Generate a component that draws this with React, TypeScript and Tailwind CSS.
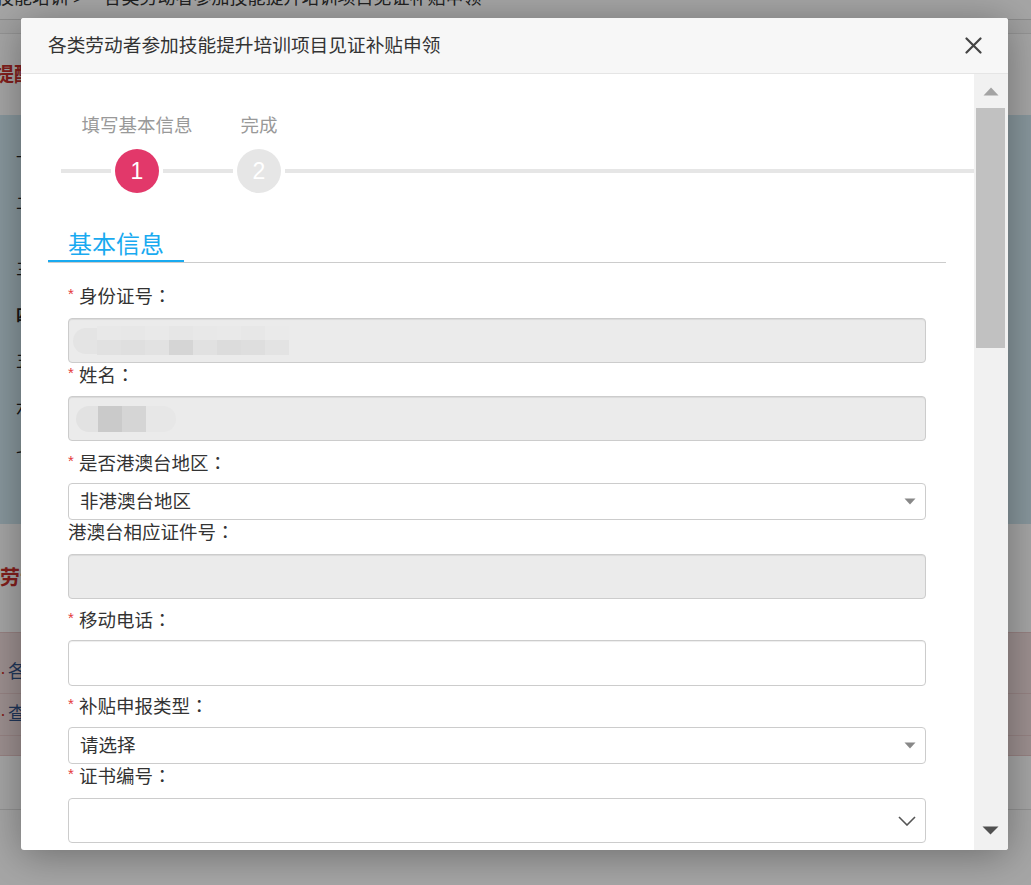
const font = "font-['Liberation_Sans','Noto_Sans_CJK_SC',sans-serif]"

function Star() {
  return <span className="relative -top-[4px] inline-block w-[11px] text-[15px] leading-none text-[#e4393c]">*</span>
}

function Label({ text, required = true }: { text: string; required?: boolean }) {
  return (
    <div className="h-[26px] whitespace-nowrap text-[18.5px] leading-[26px] text-[#333]">
      {required && <Star />}
      {text}
      <span className="font-['Noto_Sans_CJK_TC',sans-serif] leading-none">：</span>
    </div>
  )
}

function Caret() {
  return (
    <svg width="12" height="7" viewBox="0 0 12 7" className="flex-none">
      <path d="M0.5 0.5 L11.5 0.5 L6 6.5 Z" fill="#888" />
    </svg>
  )
}

function IdMosaic() {
  const top = ['#e8e8e8', '#e7e7e7', '#e9e9e9', '#e6e6e6', '#e8e8e8', '#e9e9e9', '#e7e7e7', '#eaeaea']
  const bottom = ['#e1e1e1', '#dfdfdf', '#e2e2e2', '#d5d5d5', '#e1e1e1', '#dcdcdc', '#dedede', '#e3e3e3']
  return (
    <div className="flex items-center pl-[4px] blur-[0.4px]">
      <div className="h-[26px] w-[24px] rounded-l-full bg-[#e4e4e4]" />
      <div className="flex flex-col">
        <div className="flex">
          {top.map((c, i) => (
            <div key={i} className="h-[14px] w-[24px]" style={{ background: c }} />
          ))}
        </div>
        <div className="flex">
          {bottom.map((c, i) => (
            <div key={i} className="h-[15px] w-[24px]" style={{ background: c }} />
          ))}
        </div>
      </div>
    </div>
  )
}

function NameMosaic() {
  return (
    <div className="flex items-center pl-[7px] blur-[0.4px]">
      <div className="h-[26px] w-[22px] rounded-l-full bg-[#e2e2e2]" />
      <div className="h-[26px] w-[24px] bg-[#cacaca]" />
      <div className="h-[26px] w-[24px] bg-[#d5d5d5]" />
      <div className="h-[26px] w-[30px] rounded-r-full bg-[#e7e7e7]" />
    </div>
  )
}

function BackgroundPage() {
  return (
    <div className={`${font} h-[885px] w-[1031px] overflow-hidden bg-white`}>
      <div className="h-[20px] overflow-hidden border-b border-[#d8d8d8]">
        <p className="-ml-[40px] -mt-[15px] whitespace-nowrap text-[18px] leading-[26px] text-[#333]">
          职业技能培训 &gt;&nbsp;&nbsp;&nbsp;&nbsp;各类劳动者参加技能提升培训项目见证补贴申领
        </p>
      </div>
      <div className="h-[14px] border-b border-[#e3e3e3] bg-[#f7f7f7]" />
      <div className="flex h-[81px] items-center">
        <p className="-ml-[46px] whitespace-nowrap text-[20px] font-bold text-[#c9302c]">重要提醒</p>
      </div>
      <div className="flex h-[409px] flex-col gap-[20px] bg-[#d1e8f2] pl-[16px] pt-[30px] text-[16px] leading-[26px] text-[#222]">
        <p>一、申领条件</p>
        <p>二、申领材料</p>
        <p className="pt-[20px]">三、办理流程</p>
        <p className="font-bold">四、注意事项</p>
        <p>五、补贴标准</p>
        <p>六、其他</p>
        <p>七、咨询电话</p>
      </div>
      <div className="flex h-[108px] items-center">
        <p className="text-[20px] font-bold text-[#c9302c]">劳动者申领入口</p>
      </div>
      <div className="flex h-[124px] flex-col justify-center border-y border-[#e8c8c8] bg-[#f2dede]">
        <div className="flex h-[42px] items-center gap-[2px] border-b border-[#e6caca] text-[18px] text-[#31538a]">
          <span className="text-[#c9302c]">·</span>各类劳动者申领
        </div>
        <div className="flex h-[42px] items-center gap-[2px] border-b border-[#e6caca] text-[18px] text-[#31538a]">
          <span className="text-[#c9302c]">·</span>查询申领进度
        </div>
      </div>
      <div className="h-[54px] border-b border-[#e0e0e0]" />
    </div>
  )
}

export default function App() {
  return (
    <div className="relative h-[885px] w-[1031px] overflow-hidden">
      <BackgroundPage />
      <div className="absolute inset-0 bg-black/35" />

      <div
        className={`${font} absolute left-[21px] top-[18px] flex h-[832px] w-[987px] flex-col overflow-hidden rounded-[3px] bg-white shadow-[0_5px_40px_rgba(0,0,0,0.35)]`}
      >
        <div className="flex h-[56px] flex-none items-center justify-between border-b border-[#e5e5e5] bg-[#f7f7f7] pl-[27px] pr-[26px]">
          <h2 className="text-[18.7px] font-normal leading-[26px] text-[#333]">各类劳动者参加技能提升培训项目见证补贴申领</h2>
          <svg width="17" height="17" viewBox="0 0 17 17">
            <path d="M1.5 1.5 L15.5 15.5 M15.5 1.5 L1.5 15.5" stroke="#444" strokeWidth="2.2" strokeLinecap="round" />
          </svg>
        </div>

        <div className="flex min-h-0 flex-1">
          <div className="min-w-0 flex-1 overflow-hidden">
            {/* steps */}
            <div className="flex items-end pl-[40px] pt-[39px]">
              <div className="mb-[24px] h-[4px] w-[50px] bg-[#e6e6e6]" />
              <div className="flex w-[52px] flex-col items-center">
                <span className="whitespace-nowrap text-[18.5px] leading-[26px] text-[#999]">填写基本信息</span>
                <div className="mt-[6px] rounded-full bg-white p-[4px]">
                  <div className="flex h-[44px] w-[44px] items-center justify-center rounded-full bg-[#e2386a] text-[23px] text-white">
                    1
                  </div>
                </div>
              </div>
              <div className="mb-[24px] h-[4px] w-[70px] bg-[#e6e6e6]" />
              <div className="flex w-[52px] flex-col items-center">
                <span className="whitespace-nowrap text-[18.5px] leading-[26px] text-[#999]">完成</span>
                <div className="mt-[6px] rounded-full bg-white p-[4px]">
                  <div className="flex h-[44px] w-[44px] items-center justify-center rounded-full bg-[#e6e6e6] text-[23px] text-white">
                    2
                  </div>
                </div>
              </div>
              <div className="mb-[24px] h-[4px] flex-1 bg-[#e6e6e6]" />
            </div>

            <div className="pl-[27px] pr-[28px]">
              <div className="mt-[33px] flex border-b border-[#cccccc]">
                <h3 className="border-b-2 border-[#19aaf0] px-[20px] text-[24px] font-normal leading-[30px] text-[#19aaf0]">
                  基本信息
                </h3>
              </div>

              <div className="px-[20px]">
                <div className="mt-[21px]">
                  <Label text="身份证号" />
                  <div className="mt-[8px] flex h-[45px] items-center rounded-[4px] border border-[#cccccc] bg-[#ebebeb] shadow-[inset_0_1px_1px_rgba(0,0,0,0.075)]">
                    <IdMosaic />
                  </div>
                </div>

                <div>
                  <Label text="姓名" />
                  <div className="mt-[7px] flex h-[45px] items-center rounded-[4px] border border-[#cccccc] bg-[#ebebeb] shadow-[inset_0_1px_1px_rgba(0,0,0,0.075)]">
                    <NameMosaic />
                  </div>
                </div>

                <div className="mt-[10px]">
                  <Label text="是否港澳台地区" />
                  <div className="mt-[6px] flex h-[37px] items-center justify-between rounded-[4px] border border-[#cccccc] bg-white pl-[11px] pr-[9px]">
                    <span className="text-[18.5px] leading-[26px] text-[#333]">非港澳台地区</span>
                    <Caret />
                  </div>
                </div>

                <div>
                  <Label text="港澳台相应证件号" required={false} />
                  <div className="mt-[8px] h-[45px] rounded-[4px] border border-[#cccccc] bg-[#ebebeb] shadow-[inset_0_1px_1px_rgba(0,0,0,0.075)]" />
                </div>

                <div className="mt-[9px]">
                  <Label text="移动电话" />
                  <div className="mt-[6px] h-[46px] rounded-[4px] border border-[#cccccc] bg-white shadow-[inset_0_1px_1px_rgba(0,0,0,0.075)]" />
                </div>

                <div className="mt-[8px]">
                  <Label text="补贴申报类型" />
                  <div className="mt-[7px] flex h-[37px] items-center justify-between rounded-[4px] border border-[#cccccc] bg-white pl-[11px] pr-[9px]">
                    <span className="text-[18.5px] leading-[26px] text-[#333]">请选择</span>
                    <Caret />
                  </div>
                </div>

                <div>
                  <Label text="证书编号" />
                  <div className="mt-[8px] flex h-[45px] items-center justify-end rounded-[4px] border border-[#cccccc] bg-white pr-[9px]">
                    <svg width="18" height="10" viewBox="0 0 18 10">
                      <path d="M1 1 L9 9 L17 1" fill="none" stroke="#555" strokeWidth="1.6" />
                    </svg>
                  </div>
                </div>
              </div>
            </div>
          </div>

          {/* scrollbar */}
          <div className="flex w-[34px] flex-none flex-col bg-[#f1f1f1]">
            <div className="flex h-[34px] items-center justify-center pr-[1px]">
              <svg width="16" height="9" viewBox="0 0 16 9">
                <path d="M8 0.5 L15.5 8.5 L0.5 8.5 Z" fill="#a3a3a3" />
              </svg>
            </div>
            <div className="ml-[2px] mr-[3px] h-[240px] bg-[#c1c1c1]" />
            <div className="flex-1" />
            <div className="flex h-[34px] items-start justify-center pr-[1px] pt-[10px]">
              <svg width="17" height="9" viewBox="0 0 17 9">
                <path d="M0.5 0.5 L16.5 0.5 L8.5 8.5 Z" fill="#505050" />
              </svg>
            </div>
          </div>
        </div>
      </div>
    </div>
  )
}
